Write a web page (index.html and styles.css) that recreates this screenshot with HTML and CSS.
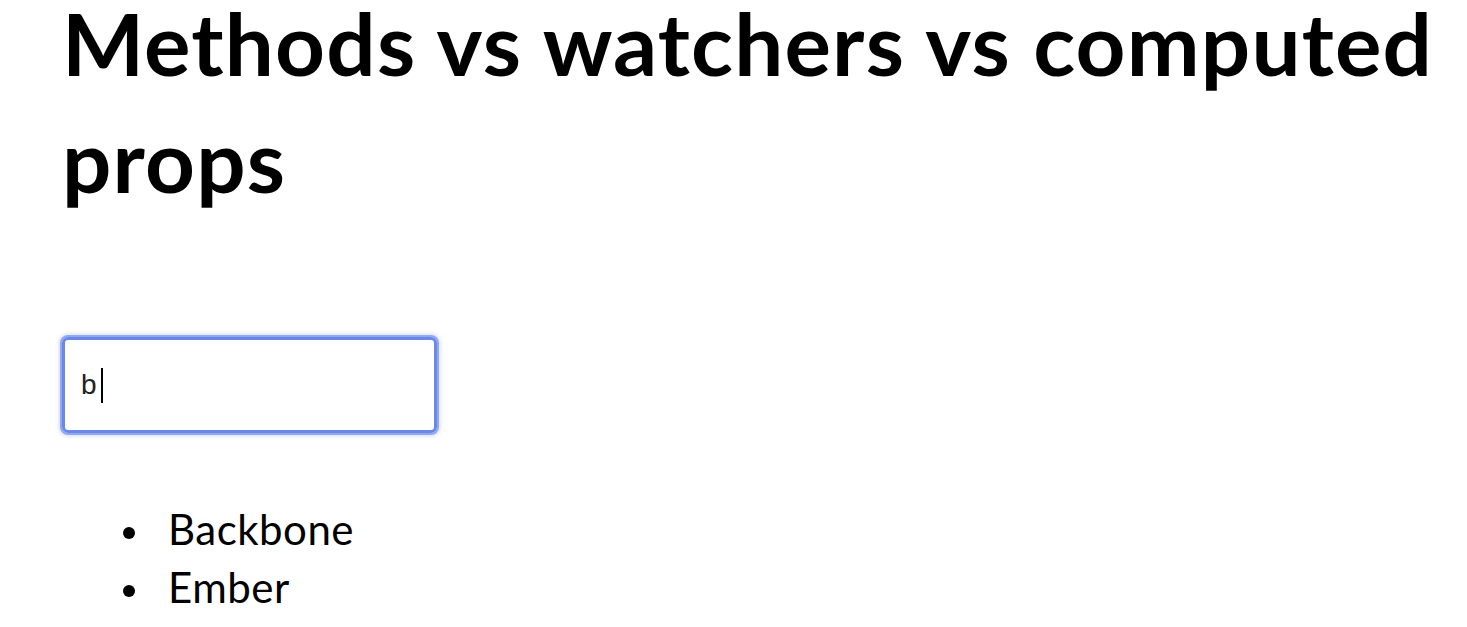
FILE: index.html
```html
<!DOCTYPE html>
<html lang="en">
<head>
<meta charset="utf-8">
<title>Methods vs watchers vs computed props</title>
<link rel="stylesheet" href="styles.css">
</head>
<body>
<main class="page">
  <h1 class="title">Methods vs watchers vs computed props</h1>
  <div class="search">
    <div class="search-input" role="textbox" aria-label="Filter"><span class="search-value">b</span><span class="caret"></span></div>
  </div>
  <ul class="results">
    <li class="result">Backbone</li>
    <li class="result">Ember</li>
  </ul>
</main>
</body>
</html>
```
FILE: styles.css
```css
html, body {
  margin: 0;
  padding: 0;
  background: #ffffff;
}

.page {
  padding-left: 62px;
  font-family: "Lato", "Noto Sans", sans-serif;
  color: #000;
}

.title {
  margin: -16px 0 0 0;
  font-family: "Lato", sans-serif;
  font-weight: 700;
  font-size: 87px;
  letter-spacing: 1.2px;
  line-height: 117px;
  color: #000;
}

.search {
  margin-top: 119px;
}

.search-input {
  box-sizing: border-box;
  width: 375px;
  height: 96px;
  border: 3px solid #6a87ea;
  border-radius: 6px;
  box-shadow: 0 0 0 2px rgba(106, 135, 234, 0.65), 0 0 4px 3px rgba(106, 135, 234, 0.3);
  padding-left: 16px;
  display: flex;
  align-items: center;
  font-family: "Liberation Sans", Arial, sans-serif;
  font-size: 28px;
  color: #222;
}

.caret {
  display: inline-block;
  width: 2px;
  height: 35px;
  background: #000;
  margin-left: 4px;
}

.results {
  margin: 67px 0 0 0;
  padding-left: 61px;
  list-style: none;
  font-size: 42px;
  letter-spacing: 0.5px;
  line-height: 58px;
}

.result {
  display: flex;
  align-items: flex-start;
}

.result::before {
  content: "";
  display: block;
  flex: 0 0 12px;
  width: 12px;
  height: 12px;
  margin-top: 27px;
  margin-right: 33px;
  border-radius: 50%;
  background: #000;
}
```
